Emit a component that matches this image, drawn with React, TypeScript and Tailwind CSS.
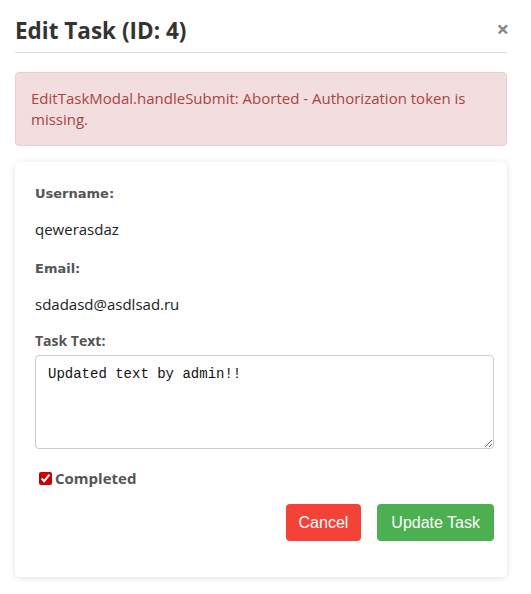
import { useState } from "react";

function Field({ label, value }: { label: string; value: string }) {
  return (
    <>
      <div className="font-['DejaVu_Sans',sans-serif] text-[13px] font-bold text-[#555] leading-[20px]">{label}</div>
      <div className="mt-[15px] text-[15px] text-[#222] leading-[20px]">{value}</div>
    </>
  );
}

export default function App() {
  const [text, setText] = useState("Updated text by admin!!");
  const [done, setDone] = useState(true);

  return (
    <div className="w-[531px] h-[594px] bg-white font-['Open_Sans',sans-serif]">
      <div className="ml-[15px] w-[492px] pt-[16px]">
        <div className="flex items-center justify-between border-b border-[#ddd] pb-[6px]">
          <h2 className="text-[22.5px] font-bold text-[#333] leading-[30px]">Edit Task (ID: 4)</h2>
          <button className="-mr-[2px] -mt-[6px] text-[22px] font-bold leading-none text-[#888]">×</button>
        </div>

        <div className="mt-[19px] rounded-[4px] border border-[#ebccd1] bg-[#f2dede] px-[15px] py-[15px] text-[15px] leading-[21px] text-[#a94442]">
          EditTaskModal.handleSubmit: Aborted - Authorization token is missing.
        </div>

        <div className="mt-[16px] rounded-[5px] bg-white pl-[20px] pr-[13px] pt-[22px] pb-[36px] shadow-[0_1px_6px_rgba(0,0,0,0.12)]">
          <Field label="Username:" value="qewerasdaz" />
          <div className="h-[20px]" />
          <Field label="Email:" value="sdadasd@asdlsad.ru" />

          <div className="mt-[17px] text-[14px] font-bold text-[#555] leading-[20px]">Task Text:</div>
          <textarea
            value={text}
            onChange={(e) => setText(e.target.value)}
            className="mt-[4px] block h-[94px] w-full rounded-[4px] border border-[#ccc] px-[12px] py-[8px] font-['Liberation_Mono',monospace] text-[14px] text-[#111] outline-none"
          />

          <label className="mt-[19px] flex items-center gap-[3px] pl-[4px]">
            <input
              type="checkbox"
              checked={done}
              onChange={(e) => setDone(e.target.checked)}
              className="h-[13px] w-[13px] accent-[#c00]"
            />
            <span className="text-[15px] font-bold text-[#555] leading-[20px]">Completed</span>
          </label>

          <div className="mt-[16px] flex justify-end gap-[16px]">
            <button className="h-[37px] rounded-[4px] bg-[#f44336] px-[13px] font-['Liberation_Sans',sans-serif] text-[16px] text-white">
              Cancel
            </button>
            <button className="h-[37px] rounded-[4px] bg-[#4caf50] px-[14px] font-['Liberation_Sans',sans-serif] text-[16px] text-white">
              Update Task
            </button>
          </div>
        </div>
      </div>
    </div>
  );
}
